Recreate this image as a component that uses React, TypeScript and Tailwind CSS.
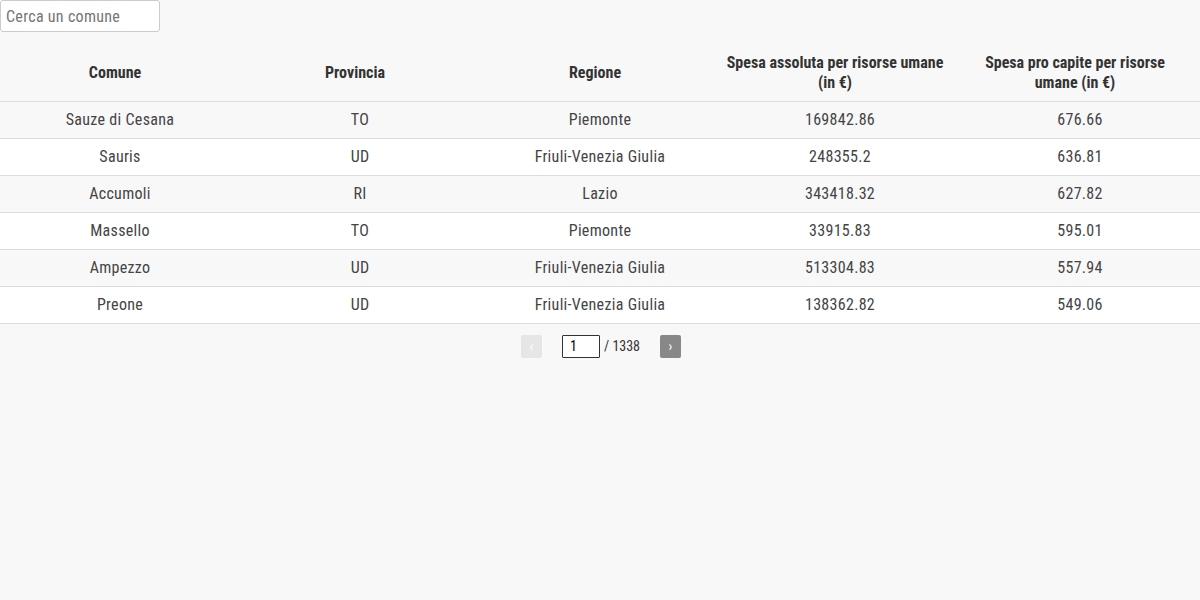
const rows = [
  { comune: "Sauze di Cesana", prov: "TO", regione: "Piemonte", assoluta: "169842.86", capite: "676.66" },
  { comune: "Sauris", prov: "UD", regione: "Friuli-Venezia Giulia", assoluta: "248355.2", capite: "636.81" },
  { comune: "Accumoli", prov: "RI", regione: "Lazio", assoluta: "343418.32", capite: "627.82" },
  { comune: "Massello", prov: "TO", regione: "Piemonte", assoluta: "33915.83", capite: "595.01" },
  { comune: "Ampezzo", prov: "UD", regione: "Friuli-Venezia Giulia", assoluta: "513304.83", capite: "557.94" },
  { comune: "Preone", prov: "UD", regione: "Friuli-Venezia Giulia", assoluta: "138362.82", capite: "549.06" },
];

const headers = [
  "Comune",
  "Provincia",
  "Regione",
  "Spesa assoluta per risorse umane (in €)",
  "Spesa pro capite per risorse umane (in €)",
];

export default function App() {
  return (
    <div
      className="min-h-screen w-[1200px] bg-[#f8f8f8] text-[#333] text-[16px]"
      style={{ fontFamily: '"Roboto Condensed", Roboto, sans-serif', fontStretch: "condensed" }}
    >
      <input
        placeholder="Cerca un comune"
        className="block w-[160px] h-[32px] px-[5px] bg-white border border-[#ccc] rounded-[3px] text-[16px] tracking-[0.3px] placeholder:text-[#757575] outline-none"
      />
      <table className="w-full mt-[9px] border-collapse table-fixed">
        <thead>
          <tr className="h-[60px] border-b border-[#ddd]">
            {headers.map((h) => (
              <th key={h} className="pl-[4px] pr-[14px] pt-[4px] font-bold leading-[20px] text-center align-middle">
                {h}
              </th>
            ))}
          </tr>
        </thead>
        <tbody className="text-[#444] tracking-[0.3px]">
          {rows.map((r, i) => (
            <tr key={r.comune} className={`h-[37px] border-b border-[#ddd] ${i % 2 === 0 ? "bg-[#f8f8f8]" : "bg-white"}`}>
              <td className="text-center">{r.comune}</td>
              <td className="text-center">{r.prov}</td>
              <td className="text-center">{r.regione}</td>
              <td className="text-center">{r.assoluta}</td>
              <td className="text-center">{r.capite}</td>
            </tr>
          ))}
        </tbody>
      </table>
      <div className="flex items-center justify-center mt-[11px] pl-[2px] text-[14px]">
        <button className="w-[21px] h-[23px] bg-[#e6e6e6] text-white rounded-[2px] text-[14px] leading-none">‹</button>
        <input
          defaultValue="1"
          className="ml-[20px] w-[38px] h-[23px] px-[7px] bg-white border border-[#333] rounded-[1px] text-[14px] text-black outline-none"
        />
        <span className="ml-[4px] text-[14px] text-[#333]">/ 1338</span>
        <button className="ml-[20px] w-[21px] h-[23px] bg-[#888] text-white rounded-[2px] text-[14px] leading-none">›</button>
      </div>
    </div>
  );
}
